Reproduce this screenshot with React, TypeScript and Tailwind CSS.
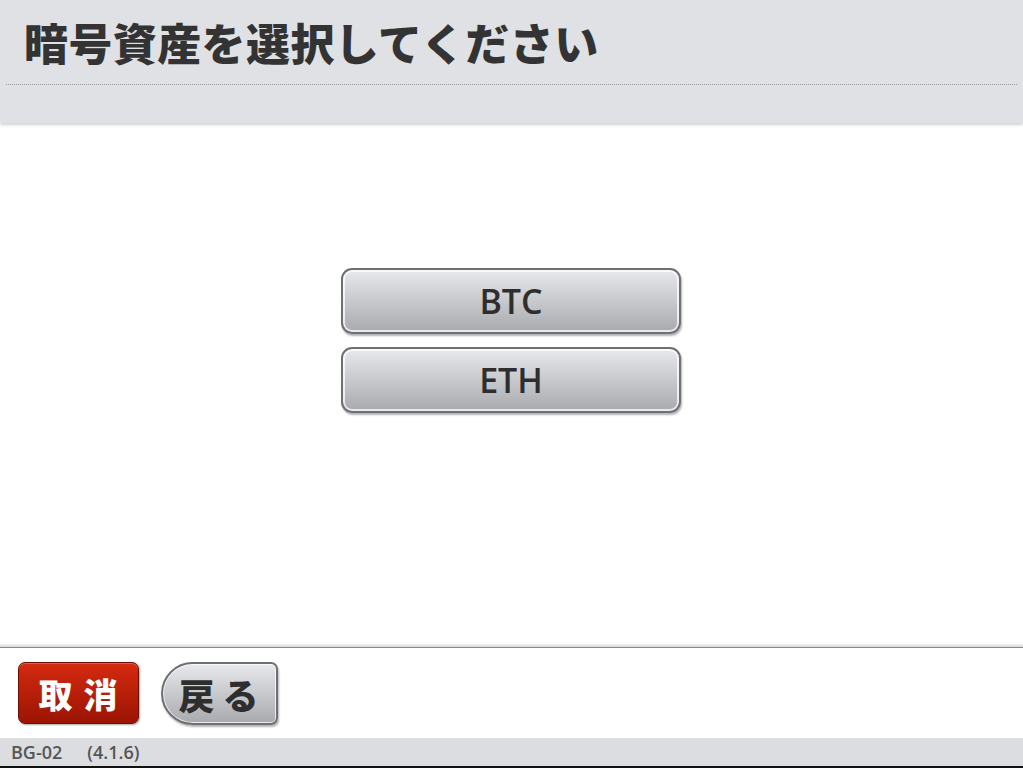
export default function App() {
  const coins = ["BTC", "ETH"];

  return (
    <div className="flex h-[768px] w-[1023px] flex-col overflow-hidden bg-white">
      {/* header */}
      <header className="relative z-10 h-[123px] shrink-0 bg-[#dfe1e5] shadow-[0_2px_3px_rgba(0,0,0,0.18)]">
        <h1
          className="pl-[24px] pt-[19px] text-[44px] leading-[47px] font-black text-[#333] tracking-[0.4px]"
          style={{ fontFamily: '"Noto Sans CJK JP", sans-serif' }}
        >
          暗号資産を選択してください
        </h1>
        <div className="mx-[6px] mt-[18px] border-t border-dotted border-[#999]" />
      </header>

      {/* body */}
      <main className="flex flex-1 flex-col items-center pt-[145px]">
        <div className="flex flex-col gap-[13px] pr-[1px]">
          {coins.map((c) => (
            <button
              key={c}
              className="h-[66px] w-[340px] rounded-[11px] border-2 border-[#6f7073] bg-gradient-to-b from-[#e8e9ec] to-[#a9aaae] text-[34px] font-semibold text-[#2e2e2e] shadow-[inset_0_0_0_2px_rgba(255,255,255,0.75),1px_2px_2px_rgba(0,0,0,0.3)]"
              style={{ fontFamily: '"Open Sans", sans-serif' }}
            >
              {c}
            </button>
          ))}
        </div>
      </main>

      {/* footer */}
      <footer className="shrink-0">
        <div className="h-[3px] bg-gradient-to-b from-[#f4f4f4] to-[#d8d8d8]" />
        <div className="h-px bg-[#8a8a8a]" />
        <div className="flex h-[90px] items-start gap-[22px] pl-[18px] pt-[14px]">
          <button
            className="h-[62px] w-[121px] rounded-[7px] border border-[#6a1006] bg-gradient-to-b from-[#d52a10] to-[#9b1404] text-[34px] font-black tracking-[11px] pl-[10px] text-white shadow-[inset_0_1px_0_rgba(255,255,255,0.25),1px_1px_2px_rgba(0,0,0,0.35)]"
            style={{ fontFamily: '"Noto Sans CJK JP", sans-serif' }}
          >
            取消
          </button>
          <button
            className="h-[63px] w-[117px] rounded-l-[32px] rounded-r-[7px] border-2 border-[#6f7073] bg-gradient-to-b from-[#e8e9ec] to-[#a9aaae] text-[36px] font-black tracking-[8px] pl-[6px] text-[#2e2e2e] shadow-[inset_0_0_0_1px_rgba(255,255,255,0.75),1px_2px_2px_rgba(0,0,0,0.3)]"
            style={{ fontFamily: '"Noto Sans CJK JP", sans-serif' }}
          >
            戻る
          </button>
        </div>
        <div
          className="flex h-[28px] items-center gap-[25px] bg-[#dcdde1] pl-[11px] text-[18px] font-semibold text-[#555]"
          style={{ fontFamily: '"Open Sans", sans-serif' }}
        >
          <span>BG-02</span>
          <span>(4.1.6)</span>
        </div>
        <div className="h-[2px] bg-[#111]" />
      </footer>
    </div>
  );
}
